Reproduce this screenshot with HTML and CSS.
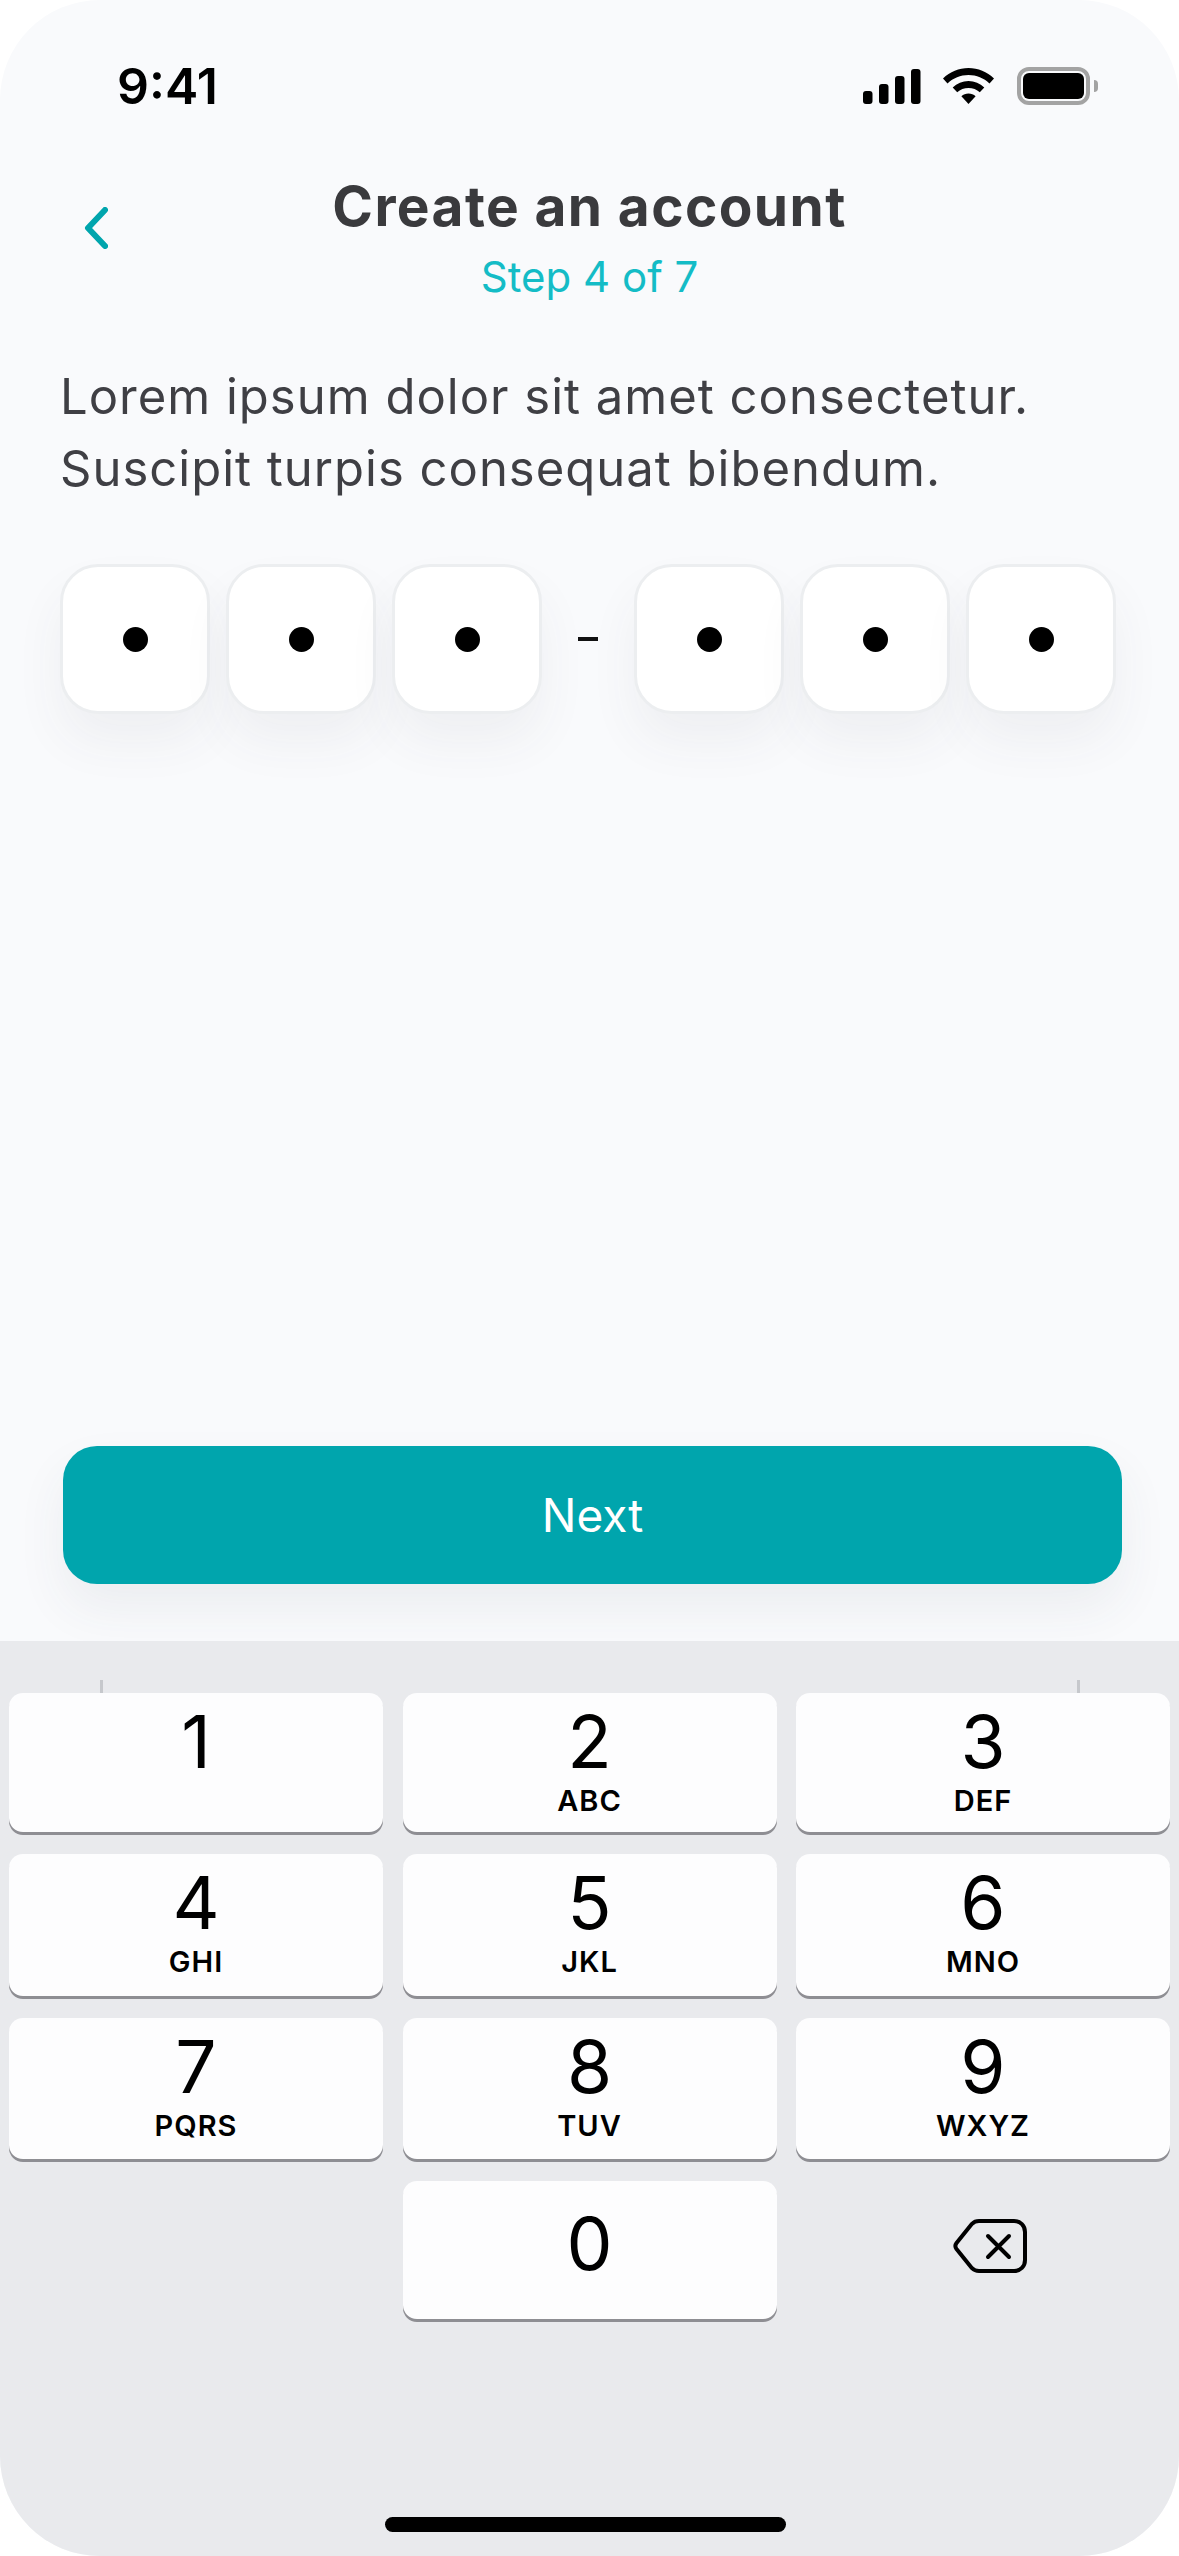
FILE: index.html
```html
<!DOCTYPE html>
<html lang="en">
<head>
    <meta charset="UTF-8">
    <meta name="viewport" content="width=device-width, initial-scale=1.0">
    <title>Create an account</title>
    <link rel="stylesheet" href="styles.css">
</head>
<body>
    <div class="phone">
        <!-- Status bar -->
        <div class="status-bar">
            <span class="time">9:41</span>
            <div class="status-icons">
                <svg class="signal" width="58" height="35" viewBox="0 0 58 35">
                    <rect x="0" y="22" width="9.5" height="13" rx="3"/>
                    <rect x="16" y="15" width="9.5" height="20" rx="3"/>
                    <rect x="32" y="7" width="9.5" height="28" rx="3"/>
                    <rect x="48" y="0" width="9.5" height="35" rx="3"/>
                </svg>
                <svg class="wifi" width="51" height="36" viewBox="0 0 51 36">
                    <path d="M25.5 0C35 0 44 3.8 51 10.500L46.500 15.500C40.800 10 33.500 7 25.500 7S10.200 10 4.500 15.500L0 10.500C7 3.800 16 0 25.500 0Z"/>
                    <path d="M25.500 13C31.500 13 37 15.300 41.300 19.400L36.800 24.300C33.700 21.500 29.800 20 25.500 20S17.300 21.500 14.200 24.300L9.700 19.400C14 15.300 19.500 13 25.500 13Z"/>
                    <path d="M25.500 25.500C28.200 25.500 30.700 26.500 32.600 28.200L25.500 36L18.400 28.200C20.300 26.500 22.800 25.500 25.500 25.500Z"/>
                </svg>
                <div class="battery">
                    <div class="battery-level"></div>
                </div>
                <div class="battery-cap"></div>
            </div>
        </div>

        <!-- Header -->
        <div class="header">
            <svg class="back" width="24" height="42" viewBox="0 0 24 42">
                <path d="M21 3L4 21L21 39" fill="none" stroke="#00a5ad" stroke-width="6" stroke-linecap="round" stroke-linejoin="round"/>
            </svg>
            <div class="header-text">
                <h1>Create an account</h1>
                <p>Step 4 of 7</p>
            </div>
        </div>

        <p class="intro">Lorem ipsum dolor sit amet consectetur.<br>Suscipit turpis consequat bibendum.</p>

        <!-- Code -->
        <div class="code">
            <div class="code-box"><span class="dot"></span></div>
            <div class="code-box"><span class="dot"></span></div>
            <div class="code-box"><span class="dot"></span></div>
            <span class="code-dash"></span>
            <div class="code-box"><span class="dot"></span></div>
            <div class="code-box"><span class="dot"></span></div>
            <div class="code-box"><span class="dot"></span></div>
        </div>

        <button class="next">Next</button>

        <!-- Keyboard -->
        <div class="keyboard">
            <span class="tick tick-left"></span>
            <span class="tick tick-right"></span>
            <div class="keys">
                <div class="key"><b>1</b></div>
                <div class="key"><b>2</b><small>ABC</small></div>
                <div class="key"><b>3</b><small>DEF</small></div>
                <div class="key"><b>4</b><small>GHI</small></div>
                <div class="key"><b>5</b><small>JKL</small></div>
                <div class="key"><b>6</b><small>MNO</small></div>
                <div class="key"><b>7</b><small>PQRS</small></div>
                <div class="key"><b>8</b><small>TUV</small></div>
                <div class="key"><b>9</b><small>WXYZ</small></div>
                <div class="key key-empty"></div>
                <div class="key key-zero"><b>0</b></div>
                <div class="key key-delete">
                    <svg width="76" height="56" viewBox="0 0 76 56">
                        <path d="M27 3H62C68.500 3 73 7.500 73 14V42C73 48.500 68.500 53 62 53H27C24 53 21.800 52 20 50.200L4.500 31C3 29 3 27 4.500 25L20 5.800C21.800 4 24 3 27 3Z" fill="none" stroke="#000" stroke-width="4" stroke-linejoin="round"/>
                        <path d="M36 18L57 39M57 18L36 39" fill="none" stroke="#000" stroke-width="4" stroke-linecap="round"/>
                    </svg>
                </div>
            </div>
            <div class="home-indicator"></div>
        </div>
    </div>
</body>
</html>
```

FILE: styles.css
```css
* {
    box-sizing: border-box;
}
body {
    margin: 0;
    background-color: #fff;
    font-family: Inter, "Liberation Sans", sans-serif;
}
.phone {
    width: 1179px;
    height: 2556px;
    background-color: #f9fafc;
    border-radius: 100px;
    overflow: hidden;
    display: flex;
    flex-direction: column;
}
.status-bar {
    display: flex;
    justify-content: space-between;
    align-items: center;
    height: 38px;
    margin-top: 67px;
    padding: 0 81px 0 117px;
}
.time {
    font-size: 50px;
    font-weight: 600;
    color: #000;
}
.status-icons {
    display: flex;
    align-items: center;
}
.signal {
    margin-right: 22px;
}
.wifi {
    margin-right: 23px;
}
.battery {
    width: 73px;
    height: 38px;
    border: 4px solid #a3a3a3;
    border-radius: 12px;
    padding: 2px;
}
.battery-level {
    height: 100%;
    background-color: #000;
    border-radius: 6px;
}
.battery-cap {
    width: 4px;
    height: 12px;
    margin-left: 4px;
    background-color: #a3a3a3;
    border-radius: 0 6px 6px 0;
}
.header {
    display: flex;
    align-items: flex-start;
    position: relative;
    margin-top: 70px;
    justify-content: center;
}
.back {
    position: absolute;
    left: 84px;
    top: 32px;
}
.header-text {
    text-align: center;
}
.header-text h1 {
    margin: 0;
    font-size: 55px;
    line-height: 62px;
    font-weight: 700;
    letter-spacing: 1.400px;
    color: #3a3a3d;
}
.header-text p {
    margin: 15px 0 0;
    font-size: 42px;
    line-height: 50px;
    font-weight: 400;
    color: #14bcc6;
}
.intro {
    margin: 59px 0 0;
    padding-left: 60px;
    font-size: 49px;
    line-height: 72px;
    letter-spacing: 1px;
    color: #3f3f44;
}
.code {
    display: flex;
    align-items: center;
    gap: 16px;
    margin-top: 59px;
    padding-left: 60px;
}
.code-box {
    width: 150px;
    height: 150px;
    background-color: #fff;
    border: 3px solid #eceef0;
    border-radius: 38px;
    box-shadow: 0 28px 50px rgba(60, 70, 90, 0.06);
    display: flex;
    justify-content: center;
    align-items: center;
}
.dot {
    width: 25px;
    height: 25px;
    border-radius: 50%;
    background-color: #000;
}
.code-dash {
    width: 20px;
    height: 4px;
    margin: 0 20px;
    background-color: #111;
}
.next {
    display: block;
    width: 1059px;
    height: 138px;
    margin: 732px 0 0 63px;
    border: none;
    border-radius: 34px;
    background-color: #00a5ad;
    color: #fff;
    font-family: inherit;
    font-size: 46px;
    box-shadow: 0 24px 50px rgba(60, 70, 90, 0.07);
}
.keyboard {
    position: relative;
    flex: 1;
    margin-top: 57px;
    background-color: #e9eaed;
    padding: 52px 9px 0;
    display: flex;
    flex-direction: column;
}
.tick {
    position: absolute;
    top: 39px;
    width: 3px;
    height: 13px;
    background-color: #c6c8cc;
}
.tick-left {
    left: 100px;
}
.tick-right {
    left: 1077px;
}
.keys {
    display: grid;
    grid-template-columns: repeat(3, 374px);
    grid-template-rows: 139px 142px 141px 138px;
    column-gap: 19.500px;
    row-gap: 22px;
}
.key {
    background-color: #fdfdfe;
    border-radius: 14px;
    box-shadow: 0 3px 0 #8e8e93;
    display: flex;
    flex-direction: column;
    align-items: center;
    padding-top: 8px;
    color: #000;
}
.key b {
    font-size: 73px;
    line-height: 82px;
    font-weight: 400;
}
.key small {
    font-size: 29px;
    line-height: 34px;
    margin-top: 1px;
    font-weight: 600;
    letter-spacing: 1px;
}
.key-zero {
    padding-top: 22px;
}
.key-empty, .key-delete {
    background: none;
    box-shadow: none;
}
.key-delete {
    padding: 37px 0 0 14px;
}
.home-indicator {
    width: 401px;
    height: 15px;
    margin: auto 0 24px 376px;
    background-color: #000;
    border-radius: 8px;
}
```
